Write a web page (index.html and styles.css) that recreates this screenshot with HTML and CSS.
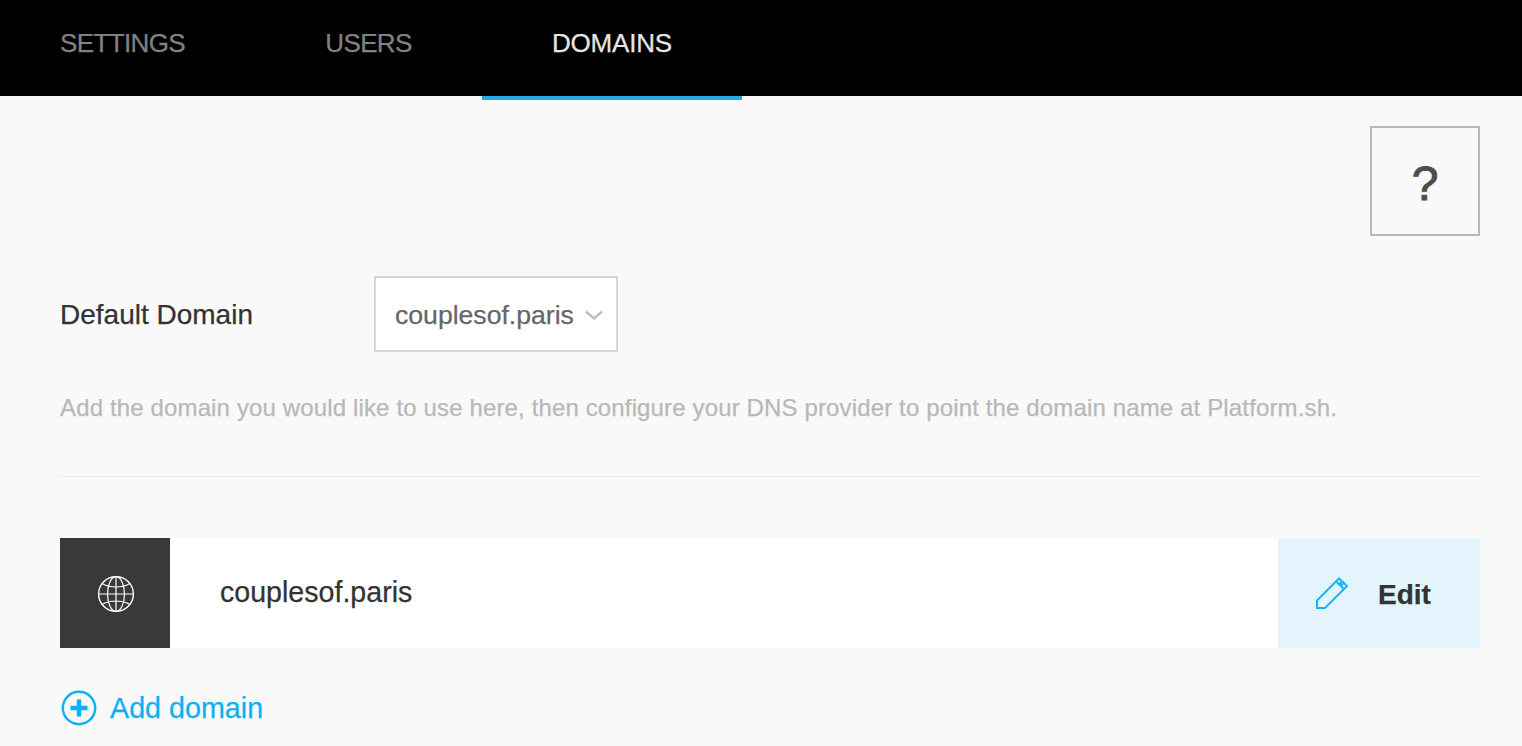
FILE: index.html
```html
<!DOCTYPE html>
<html lang="en">
<head>
<meta charset="utf-8">
<title>Domains</title>
<link rel="stylesheet" href="styles.css">
</head>
<body>
<nav class="tabs">
  <a class="tab tab-settings">SETTINGS</a>
  <a class="tab tab-users">USERS</a>
  <a class="tab tab-domains active">DOMAINS</a>
</nav>
<main class="content">
  <div class="help-row"><button class="help">?</button></div>
  <div class="default-row">
    <label class="default-label">Default Domain</label>
    <div class="select">
      <span>couplesof.paris</span>
      <svg class="chevron" width="18" height="10" viewBox="0 0 18 10"><path d="M1 1.5 9 8.5 17 1.5" fill="none" stroke="#bdbdbd" stroke-width="2.4"/></svg>
    </div>
  </div>
  <p class="hint">Add the domain you would like to use here, then configure your DNS provider to point the domain name at Platform.sh.</p>
  <hr class="divider">
  <div class="domain-row">
    <div class="domain-icon">
      <svg width="38" height="38" viewBox="0 0 38 38" fill="none" stroke="#fff" stroke-width="1.2">
        <circle cx="19" cy="19" r="17.4" stroke-width="1.4"/>
        <ellipse cx="19" cy="19" rx="8.5" ry="17.4"/>
        <path d="M19 1.6V36.4M1.6 19H36.4M5 8.5C9 11 14 12 19 12S29 11 33 8.5M5 29.5C9 27 14 26 19 26S29 27 33 29.5"/>
      </svg>
    </div>
    <div class="domain-name">couplesof.paris</div>
    <button class="edit">
      <svg width="34" height="34" viewBox="0 0 34 34" fill="none" stroke="#18b4f5" stroke-width="2">
        <path d="M2 24.5 24 2.5 32 10 10 32H2Z"/>
        <path d="M21 5.5 29 13M24.5 6 28 9.3" stroke-width="1.9"/>
      </svg>
      <span>Edit</span>
    </button>
  </div>
  <a class="add">
    <svg width="36" height="36" viewBox="0 0 36 36"><circle cx="18" cy="18" r="16.2" fill="none" stroke="#0bb0f5" stroke-width="2.4"/><path d="M18 9.5V26.5M9.5 18H26.5" stroke="#0bb0f5" stroke-width="4.4" fill="none"/></svg>
    <span>Add domain</span>
  </a>
</main>
</body>
</html>
```
FILE: styles.css
```css
* { box-sizing: border-box; }
html, body { margin: 0; height: 100%; overflow: hidden; }
body { background: #f9f9f9; font-family: "Liberation Sans", Arial, sans-serif; color: #333; -webkit-text-stroke: 0.25px; }
.tabs { height: 96px; background: #000; display: flex; }
.tab { height: 100px; font-size: 26px; line-height: 87px; letter-spacing: -0.65px; color: #828282; text-align: center; white-space: nowrap; }
.tab-settings { width: 125px; margin-left: 60px; }
.tab-users { width: 87px; margin-left: 140px; }
.tab-domains { width: 260px; margin-left: 70px; }
.tab.active { color: #e6e6e6; border-bottom: 4px solid #29abe2; letter-spacing: -0.2px; }
.content { padding: 30px 42px 0 60px; }
.help-row { display: flex; justify-content: flex-end; }
.help { width: 110px; height: 110px; background: transparent; border: 2px solid #b8b8b8; font: 48px "Liberation Sans", Arial, sans-serif; -webkit-text-stroke: 1px #4d4d4d; color: #4d4d4d; padding: 5px 0 0; }
.default-row { display: flex; align-items: center; margin-top: 40px; }
.default-label { width: 314px; font-size: 28px; line-height: 78px; height: 76px; color: #333; }
.select { width: 244px; height: 76px; background: #fff; border: 2px solid #d6d6d6; display: flex; align-items: center; padding: 2px 0 0 19px; font-size: 26.6px; color: #666; }
.chevron { margin-left: 11px; margin-top: 0; }
.hint { margin: 40px 0 0; font-size: 24px; line-height: 32px; letter-spacing: 0.14px; color: #b8b8b8; }
.divider { margin: 52px 0 0; border: 0; border-top: 1px solid #ececec; }
.domain-row { display: flex; height: 110px; margin-top: 61px; background: #fff; align-items: stretch; }
.domain-icon { width: 110px; background: #393939; display: flex; align-items: center; justify-content: center; padding: 2px 0 0 2px; }
.domain-name { flex: 1; padding-left: 50px; font-size: 28.6px; line-height: 109px; color: #333; }
.edit { width: 202px; border: 0; background: #e3f4fc; display: flex; align-items: center; padding: 3px 0 0 37px; font: bold 28px "Liberation Sans", Arial, sans-serif; color: #333; }
.edit svg { margin-top: -4px; }
.edit span { margin-left: 29px; }
.add { display: flex; align-items: center; margin-top: 42px; margin-left: 1px; color: #0bb0f5; font-size: 28.7px; }
.add span { margin-left: 13px; }
```
